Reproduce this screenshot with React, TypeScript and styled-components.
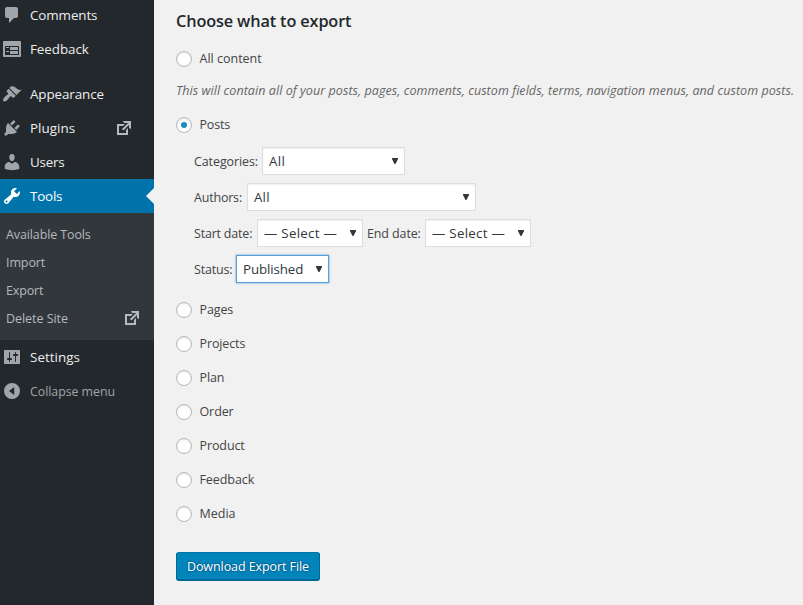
import React from 'react';
import styled, { createGlobalStyle, css } from 'styled-components';

const GlobalStyle = createGlobalStyle`
  *, *::before, *::after { box-sizing: border-box; }
  body {
    margin: 0;
    overflow: hidden;
    background: #f1f1f1;
    color: #444;
    font: 12.5px/20px "Open Sans", "Noto Sans", sans-serif;
  }
`;

const Label = styled.span<{ $track?: number }>`
  letter-spacing: ${(p) => p.$track ?? 0}px;
  white-space: nowrap;
`;

const Shell = styled.div`
  display: flex;
  height: 605px;
  overflow: hidden;
`;

const Sidebar = styled.nav`
  flex: 0 0 154px;
  height: 607px;
  margin-top: -2px;
  background: #23282d;
`;

const MenuGroup = styled.ul`
  list-style: none;
  margin: 0 0 11px;
  padding: 0;
`;

const MenuItem = styled.li<{ $current?: boolean; $muted?: boolean }>`
  position: relative;
  display: flex;
  align-items: center;
  height: 34px;
  padding: 0 20px 0 2px;
  gap: 8px;
  font-size: ${(p) => (p.$muted ? '12.4px' : '13.4px')};
  line-height: ${(p) => (p.$muted ? '22px' : '20px')};
  color: ${(p) => (p.$muted ? '#a0a5aa' : p.$current ? '#fff' : '#eee')};
  ${(p) =>
    p.$current &&
    css`
      background: #0073aa;
      &::after {
        content: '';
        position: absolute;
        right: 0;
        top: 9px;
        border: 8px solid transparent;
        border-left-width: 0;
        border-right-color: #f1f1f1;
      }
    `}
`;

const MenuLabel = styled(Label)<{ $muted?: boolean }>`
  padding-top: ${(p) => (p.$muted ? '2px' : '0')};
`;

const Icon = styled.svg<{ $active?: boolean }>`
  flex: none;
  width: 20px;
  height: 20px;
  fill: ${(p) => (p.$active ? '#fff' : '#a0a5aa')};
`;

const TrailingIcon = styled(Icon)`
  margin-left: auto;
  fill: #b4b9be;
`;

const Submenu = styled.ul`
  list-style: none;
  margin: 0;
  padding: 7px 12px 8px 6px;
  height: 127px;
  background: #32373c;
  color: #b4b9be;
`;

const SubmenuItem = styled.li`
  display: flex;
  align-items: center;
  height: 28px;
`;

/* Body-size label, nudged onto the row's optical centre */
const RowLabel = styled(Label)`
  padding-top: 2px;
`;

const Content = styled.main`
  flex: 1;
  min-width: 0;
  padding: 9px 0 0 22px;
`;

const Heading = styled.h2`
  margin: 0;
  height: 24px;
  font-size: 16.3px;
  line-height: 24px;
  font-weight: 600;
  color: #23282d;
`;

const Option = styled.label`
  display: flex;
  align-items: center;
  height: 34px;
  gap: 7.5px;
`;

const Radio = styled.span<{ $checked?: boolean }>`
  display: grid;
  place-items: center;
  width: 16px;
  height: 16px;
  margin-top: 1px;
  border: 1px solid #b4b9be;
  border-radius: 50%;
  background: #fff;
  box-shadow: inset 0 1px 2px rgba(0, 0, 0, 0.1);
  &::before {
    content: '';
    width: 6px;
    height: 6px;
    border-radius: 50%;
    background: ${(p) => (p.$checked ? '#1e8cbe' : 'transparent')};
  }
`;

const FirstOption = styled.div`
  margin-top: 8px;
`;

const Description = styled.p`
  margin: 6px 0;
  height: 20px;
  font-style: italic;
  color: #666;
`;

const Filters = styled.div`
  display: grid;
  gap: 8px;
  margin: 6px 0 9px;
  padding-left: 18px;
`;

const FilterRow = styled.div`
  display: flex;
  align-items: center;
  height: 28px;
`;

const FieldName = styled.span<{ $width: number; $indent?: number }>`
  flex: 0 0 ${(p) => p.$width}px;
  padding: 2px 0 0 ${(p) => p.$indent ?? 0}px;
`;

const SelectBox = styled.span<{ $width: number; $focused?: boolean }>`
  display: flex;
  align-items: center;
  justify-content: space-between;
  width: ${(p) => p.$width}px;
  height: 28px;
  padding: 0 6px;
  border: 1px solid ${(p) => (p.$focused ? '#5b9dd9' : '#ddd')};
  background: #fff;
  color: #32373c;
  font-size: 13.3px;
  box-shadow: ${(p) =>
    p.$focused ? '0 0 2px rgba(30, 140, 190, 0.8)' : 'inset 0 1px 2px rgba(0, 0, 0, 0.07)'};
`;

const Arrow = styled.svg`
  width: 6px;
  height: 6px;
  margin-top: -1px;
  fill: #32373c;
`;

const Button = styled.button`
  display: block;
  width: 144px;
  height: 28px;
  margin: 22px 0 0;
  padding: 1px 0 0;
  border: 1px solid;
  border-color: #0073aa #006799 #006799;
  border-radius: 3px;
  background: #0085ba;
  box-shadow: 0 1px 0 #006799;
  color: #fff;
  font: inherit;
  text-shadow: 0 -1px 1px #006799, 1px 0 1px #006799, 0 1px 1px #006799, -1px 0 1px #006799;
`;

const paths = {
  comments: 'M5 2h9c1.1 0 2 .9 2 2v7c0 1.1-.9 2-2 2h-2l-5 5v-5H5c-1.1 0-2-.9-2-2V4c0-1.1.9-2 2-2z',
  feedback:
    'M2 2h16c.55 0 1 .45 1 1v14c0 .55-.45 1-1 1H2c-.55 0-1-.45-1-1V3c0-.55.45-1 1-1zm15 14V7H3v9h14zM4 8v1h3V8H4zm4 0v3h8V8H8zm-4 4v1h3v-1H4zm4 0v3h8v-3H8z',
  appearance:
    'M14.48 11.06L7.41 3.99l1.5-1.5c.5-.56 2.3-.47 3.51.32 1.21.8 1.43 1.28 2.91 2.1 1.18.64 2.45 1.26 4.45.85zm-.71.71L6.7 4.7 4.93 6.47c-.39.39-.39 1.02 0 1.41l1.06 1.06c.39.39.39 1.03 0 1.42-.6.6-1.43 1.11-2.21 1.69-.35.26-.7.53-1.01.84C1.43 14.23.4 16.08 1.4 17.07c.99 1 2.84-.03 4.18-1.36.31-.31.58-.66.85-1.02.57-.78 1.08-1.61 1.69-2.21.39-.39 1.02-.39 1.41 0l1.06 1.06c.39.39 1.02.39 1.41 0z',
  plugins:
    'M13.11 4.36L9.87 7.6 8 5.73l3.24-3.24c.35-.34 1.05-.2 1.56.32.52.51.66 1.21.31 1.55zm-8 1.77l.91-1.12 9.01 9.01-1.19.84c-.71.71-2.63 1.16-3.82 1.16H6.14L4.9 17.26c-.59.59-1.54.59-2.12 0-.59-.58-.59-1.53 0-2.12l1.24-1.24v-3.88c0-1.13.4-3.19 1.09-3.89zm7.26 3.97l3.24-3.24c.34-.35 1.04-.21 1.55.31.52.51.66 1.21.31 1.55l-3.24 3.25z',
  users:
    'M10 9.25c-2.27 0-2.73-3.44-2.73-3.44C7 4.02 7.82 2 9.97 2c2.16 0 2.98 2.02 2.71 3.81 0 0-.41 3.44-2.68 3.44zm0 2.57L12.72 10c2.39 0 4.52 2.33 4.52 4.53v2.49s-3.65 1.13-7.24 1.13c-3.65 0-7.24-1.13-7.24-1.13v-2.49c0-2.25 1.94-4.48 4.47-4.48z',
  tools:
    'M16.68 9.77c-1.34 1.34-3.3 1.67-4.95.99l-5.41 6.52c-.99.99-2.59.99-3.58 0s-.99-2.59 0-3.57l6.52-5.42c-.68-1.65-.35-3.61.99-4.95 1.28-1.28 3.12-1.62 4.72-1.06l-2.89 2.89 2.82 2.82 2.86-2.87c.53 1.58.18 3.39-1.08 4.65zM3.81 16.21c.4.39 1.04.39 1.43 0 .4-.4.4-1.04 0-1.43-.39-.4-1.03-.4-1.43 0-.39.39-.39 1.03 0 1.43z',
  settings:
    'M18 16V4c0-.55-.45-1-1-1H3c-.55 0-1 .45-1 1v12c0 .55.45 1 1 1h14c.55 0 1-.45 1-1zM8 11h1c.55 0 1 .45 1 1s-.45 1-1 1H8v1.5c0 .28-.22.5-.5.5s-.5-.22-.5-.5V13H6c-.55 0-1-.45-1-1s.45-1 1-1h1V5.5c0-.28.22-.5.5-.5s.5.22.5.5V11zm5-2h-1c-.55 0-1-.45-1-1s.45-1 1-1h1V5.5c0-.28.22-.5.5-.5s.5.22.5.5V7h1c.55 0 1 .45 1 1s-.45 1-1 1h-1v5.5c0 .28-.22.5-.5.5s-.5-.22-.5-.5V9z',
  collapse: 'M10 2a8 8 0 1 0 0 16a8 8 0 1 0 0-16zM12.2 6v8L7 10z',
  external: 'M9 3h8v8l-2-1V6.92l-5.6 5.59-1.41-1.41L14.08 5H10zm3 12v-3l2-2v7H3V6h8L9 8H5v7h7z',
};

type IconName = keyof typeof paths;

interface Entry {
  icon: IconName;
  text: string;
  track?: number;
  external?: boolean;
  current?: boolean;
  muted?: boolean;
}

const topItems: Entry[] = [
  { icon: 'comments', text: 'Comments', track: -0.1 },
  { icon: 'feedback', text: 'Feedback', track: -0.05 },
];

const mainItems: Entry[] = [
  { icon: 'appearance', text: 'Appearance', track: -0.1 },
  { icon: 'plugins', text: 'Plugins', track: 0.05, external: true },
  { icon: 'users', text: 'Users', track: -0.2 },
  { icon: 'tools', text: 'Tools', track: -0.2, current: true },
];

const lastItems: Entry[] = [
  { icon: 'settings', text: 'Settings', track: 0.05 },
  { icon: 'collapse', text: 'Collapse menu', muted: true, track: -0.05 },
];

const subItems = [
  { text: 'Available Tools', track: -0.12 },
  { text: 'Import', track: -0.1 },
  { text: 'Export', track: -0.15 },
  { text: 'Delete Site', track: -0.05, external: true },
];

const otherTypes = [
  { text: 'Pages', track: -0.1 },
  { text: 'Projects', track: -0.12 },
  { text: 'Plan', track: -0.1 },
  { text: 'Order', track: -0.1 },
  { text: 'Product', track: -0.1 },
  { text: 'Feedback', track: -0.08 },
  { text: 'Media', track: 0 },
];

const MenuRow = ({ icon, text, track, external, current, muted }: Entry) => (
  <MenuItem $current={current} $muted={muted}>
    <Icon viewBox="0 0 20 20" $active={current}>
      <path fillRule="evenodd" d={paths[icon]} />
    </Icon>
    <MenuLabel $track={track} $muted={muted}>
      {text}
    </MenuLabel>
    {external && (
      <TrailingIcon viewBox="0 0 20 20">
        <path d={paths.external} />
      </TrailingIcon>
    )}
  </MenuItem>
);

const RadioOption = ({ text, track, checked }: { text: string; track?: number; checked?: boolean }) => (
  <Option>
    <Radio $checked={checked} />
    <RowLabel $track={track}>{text}</RowLabel>
  </Option>
);

const Select = (p: { text: string; width: number; track?: number; focused?: boolean }) => (
  <SelectBox $width={p.width} $focused={p.focused}>
    <Label $track={p.track}>{p.text}</Label>
    <Arrow viewBox="0 0 6 6">
      <path d="M0 0h6v1L3.5 6h-1L0 1z" />
    </Arrow>
  </SelectBox>
);

export default function App() {
  return (
    <Shell>
      <GlobalStyle />
      <Sidebar>
        <MenuGroup>
          {topItems.map((i) => (
            <MenuRow key={i.text} {...i} />
          ))}
        </MenuGroup>
        {mainItems.map((i) => (
          <MenuRow key={i.text} {...i} />
        ))}
        <Submenu>
          {subItems.map((i) => (
            <SubmenuItem key={i.text}>
              <RowLabel $track={i.track}>{i.text}</RowLabel>
              {i.external && (
                <TrailingIcon viewBox="0 0 20 20">
                  <path d={paths.external} />
                </TrailingIcon>
              )}
            </SubmenuItem>
          ))}
        </Submenu>
        {lastItems.map((i) => (
          <MenuRow key={i.text} {...i} />
        ))}
      </Sidebar>
      <Content>
        <Heading>
          <Label $track={-0.14}>Choose what to export</Label>
        </Heading>
        <FirstOption>
          <RadioOption text="All content" track={0} />
        </FirstOption>
        <Description>
          <Label $track={0.066}>
            This will contain all of your posts, pages, comments, custom fields, terms, navigation menus, and custom
            posts.
          </Label>
        </Description>
        <RadioOption text="Posts" track={-0.2} checked />
        <Filters>
          <FilterRow>
            <FieldName $width={68}>
              <Label $track={-0.1}>Categories:</Label>
            </FieldName>
            <Select text="All" width={143} track={0.4} />
          </FilterRow>
          <FilterRow>
            <FieldName $width={53}>
              <Label $track={-0.2}>Authors:</Label>
            </FieldName>
            <Select text="All" width={229} track={0.2} />
          </FilterRow>
          <FilterRow>
            <FieldName $width={63}>
              <Label $track={-0.2}>Start date:</Label>
            </FieldName>
            <Select text="— Select —" width={106} track={0.28} />
            <FieldName $width={62} $indent={4}>
              <Label $track={-0.12}>End date:</Label>
            </FieldName>
            <Select text="— Select —" width={106} track={0.28} />
          </FilterRow>
          <FilterRow>
            <FieldName $width={42}>
              <Label $track={-0.2}>Status:</Label>
            </FieldName>
            <Select text="Published" width={93} track={-0.1} focused />
          </FilterRow>
        </Filters>
        {otherTypes.map((o) => (
          <RadioOption key={o.text} {...o} />
        ))}
        <Button type="button">
          <Label $track={-0.08}>Download Export File</Label>
        </Button>
      </Content>
    </Shell>
  );
}
